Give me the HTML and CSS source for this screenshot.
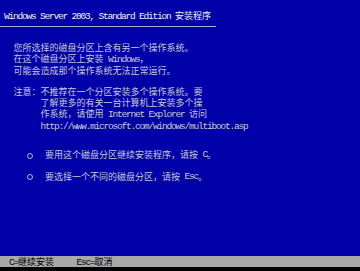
FILE: index.html
```html
<!DOCTYPE html>
<html lang="zh-CN">

<head>
    <meta charset="UTF-8">
    <meta name="viewport" content="width=device-width, initial-scale=1.0">
    <title>Windows Server 2003 安装程序</title>
    <link rel="stylesheet" href="styles.css">
</head>

<body>
    <div class="screen">
        <header class="title"><span class="en">Windows Server 2003, Standard Edition </span>安装程序</header>

        <main class="content">
            <div class="para">
                <p>您所选择的磁盘分区上含有另一个操作系统。</p>
                <p>在这个磁盘分区上安装<span class="en"> Windows</span>，</p>
                <p>可能会造成那个操作系统无法正常运行。</p>
            </div>

            <div class="note">
                <p class="first">注意：不推荐在一个分区安装多个操作系统。要</p>
                <p>了解更多的有关一台计算机上安装多个操</p>
                <p>作系统，请使用<span class="en"> Internet Explorer </span>访问</p>
                <p><span class="en">http://www.microsoft.com/windows/multiboot.asp</span></p>
            </div>

            <ul class="choices">
                <li><span class="dot"></span>要用这个磁盘分区继续安装程序，请按<span class="en"> C</span>。</li>
                <li><span class="dot"></span>要选择一个不同的磁盘分区，请按<span class="en"> Esc</span>。</li>
            </ul>
        </main>

        <footer class="status"><span class="en">C=</span>继续安装<span class="en">     Esc=</span>取消</footer>
    </div>
</body>

</html>
```

FILE: styles.css
```css
* {
    margin: 0;
    padding: 0;
    box-sizing: border-box;
}

body {
    background-color: #0000a8;
    font-family: "Noto Sans CJK SC", "Liberation Mono", monospace;
    font-size: 9px;
    color: #c8c8d0;
}

.screen {
    width: 360px;
    height: 271px;
    display: flex;
    flex-direction: column;
    overflow: hidden;
}

/* half width latin cells, like the text mode font */
.en {
    font-family: "Liberation Mono", monospace;
    font-size: 9.5px;
    letter-spacing: -1.2px;
    white-space: pre;
}

/* Header */
.title {
    width: 216px;
    padding: 10px 0 4px 4px;
    line-height: 11px;
    color: #f0f0f0;
    border-bottom: 1px solid #b0b0d0;
    white-space: nowrap;
}

/* Body text */
.content {
    line-height: 10.84px;
    white-space: nowrap;
}

.para {
    margin-top: 16px;
    padding-left: 13.5px;
}

.note {
    margin-top: 10.5px;
    padding-left: 40.5px;
}

.note .first {
    text-indent: -27px;
}

.choices {
    list-style: none;
    margin-top: 18px;
    display: flex;
    flex-direction: column;
    gap: 10.8px;
}

.choices li {
    display: flex;
    align-items: center;
    height: 10.84px;
    padding-left: 27px;
}

.dot {
    width: 6px;
    height: 6px;
    border: 1.5px solid #b8b8d8;
    border-radius: 50%;
    margin-right: 12px;
}

/* Status bar */
.status {
    margin-top: auto;
    height: 15px;
    padding-left: 9px;
    line-height: 11px;
    background-color: #a8a8a8;
    border-bottom: 4px solid #000000;
    color: #000000;
    white-space: nowrap;
}
```
